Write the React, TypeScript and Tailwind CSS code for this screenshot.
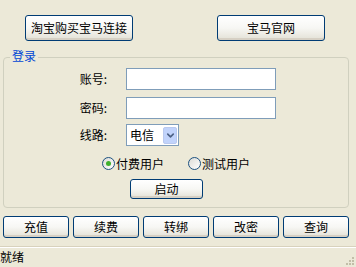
import { ChevronDown } from 'lucide-react'

const font = { fontFamily: '"Noto Sans CJK SC", "Liberation Sans", sans-serif' }

function XpButton({ label, className }: { label: string; className: string }) {
  return (
    <button
      className={`${className} flex items-center justify-center rounded-[3px] border border-[#003c74] bg-linear-to-b from-white via-[#f7f7f4] to-[#e3e1d6] text-[12px] leading-none text-black shadow-[inset_0_-2px_0_#d6d0c4]`}
    >
      {label}
    </button>
  )
}

function Radio({ label, checked }: { label: string; checked?: boolean }) {
  return (
    <label className="flex items-center gap-[1px]">
      <span className="flex h-[13px] w-[13px] items-center justify-center rounded-full border border-[#1c5180] bg-linear-to-br from-[#dcdcd6] to-white">
        {checked && <span className="h-[5px] w-[5px] rounded-full bg-[#3fb02e]" />}
      </span>
      <span className="text-[12px] leading-none">{label}</span>
    </label>
  )
}

function FieldRow({ label, children }: { label: string; children: React.ReactNode }) {
  return (
    <div className="flex items-center">
      <span className="w-[104px] pr-[1px] text-right text-[12px] leading-none">{label}</span>
      <div className="ml-[18px]">{children}</div>
    </div>
  )
}

export default function App() {
  return (
    <div className="flex h-[267px] w-[356px] flex-col overflow-hidden bg-[#ece9d8] text-black" style={font}>
      {/* top links */}
      <div className="flex gap-[84px] pl-[25px] pt-[15px]">
        <XpButton label="淘宝购买宝马连接" className="h-[26px] w-[108px]" />
        <XpButton label="宝马官网" className="h-[26px] w-[108px]" />
      </div>

      {/* login group */}
      <div className="relative ml-[3px] mt-[16px] h-[151px] w-[346px] rounded-[4px] border border-[#d0d0bf]">
        <span className="absolute left-[6px] top-[-8px] bg-[#ece9d8] px-[2px] text-[12px] leading-none text-[#0046d5]">
          登录
        </span>
        <div className="flex flex-col pt-[10px]">
          <FieldRow label="账号:">
            <div className="h-[22px] w-[150px] border border-[#7f9db9] bg-white" />
          </FieldRow>
          <div className="h-[7px]" />
          <FieldRow label="密码:">
            <div className="h-[22px] w-[150px] border border-[#7f9db9] bg-white" />
          </FieldRow>
          <div className="h-[5px]" />
          <FieldRow label="线路:">
            <div className="flex h-[22px] w-[53px] items-center border border-[#7f9db9] bg-white pl-[3px] pr-[1px]">
              <span className="flex-1 text-[12px] leading-none">电信</span>
              <span className="flex h-[17px] w-[14px] items-center justify-center rounded-[2px] border border-[#b9c9ef] bg-[#c1d3fb]">
                <ChevronDown size={11} strokeWidth={3.5} className="text-[#4d6185]" />
              </span>
            </div>
          </FieldRow>
          <div className="mt-[11px] flex gap-[24px] pl-[98px]">
            <Radio label="付费用户" checked />
            <Radio label="测试用户" />
          </div>
          <div className="mt-[9px] pl-[126px]">
            <XpButton label="启动" className="h-[20px] w-[73px]" />
          </div>
        </div>
      </div>

      {/* action buttons */}
      <div className="mt-[8px] flex gap-[4px] pl-[3px]">
        {['充值', '续费', '转绑', '改密', '查询'].map((t) => (
          <XpButton key={t} label={t} className="h-[22px] w-[66px]" />
        ))}
      </div>

      {/* status bar */}
      <div className="mt-[8px] flex flex-1 items-center border-t border-[#d8d2bd] shadow-[inset_0_1px_0_#fff]">
        <span className="ml-0 text-[12px] leading-none">就绪</span>
        <div className="ml-auto mr-[2px] mt-auto mb-[2px] grid grid-cols-3 gap-[1px]">
          {[0, 0, 1, 0, 1, 1, 1, 1, 1].map((v, i) => (
            <span key={i} className={`h-[2px] w-[2px] ${v ? 'bg-[#c2bea8]' : ''}`} />
          ))}
        </div>
      </div>
    </div>
  )
}
